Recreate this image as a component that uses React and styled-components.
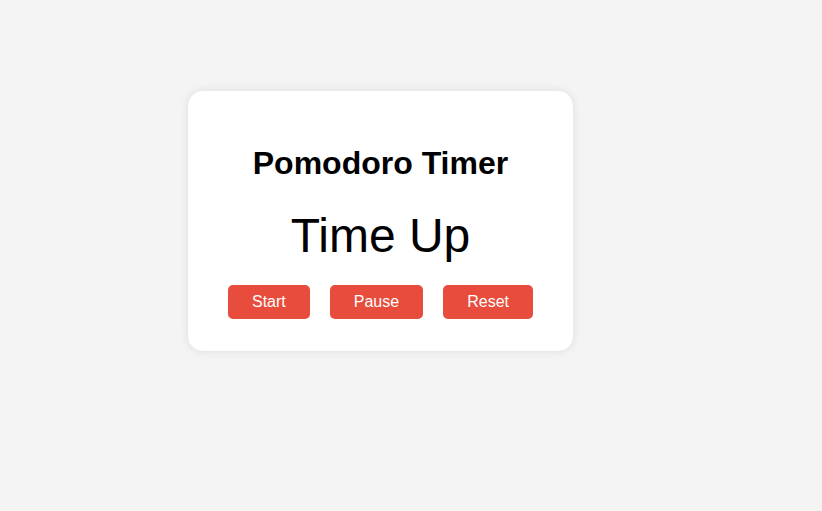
import React from 'react'
import styled, { createGlobalStyle } from 'styled-components'

const GlobalStyle = createGlobalStyle`
  body {
    margin: 0;
    background: #f4f4f4;
    font-family: "Liberation Sans", Arial, sans-serif;
  }
`

const Page = styled.div`
  display: flex;
  align-items: flex-start;
  padding: 91px 0 0 188px;
  min-height: 100vh;
  box-sizing: border-box;
`

const Card = styled.div`
  display: flex;
  flex-direction: column;
  align-items: center;
  padding: 30px 30px 32px;
  background: #fff;
  border-radius: 15px;
  box-shadow: 0 0 10px rgba(0, 0, 0, 0.1);
`

const Title = styled.h1`
  margin: 24px 0 26px;
  font-size: 32px;
  line-height: 37px;
  font-weight: 700;
  color: #000;
`

const Clock = styled.div`
  margin-bottom: 22px;
  font-size: 48px;
  line-height: 55px;
  color: #000;
`

const Controls = styled.div`
  display: flex;
  gap: 20px;
  padding: 0 10px;
`

const Button = styled.button`
  padding: 8px 24px;
  border: none;
  border-radius: 5px;
  background: #e74c3c;
  color: #fff;
  font-family: inherit;
  font-size: 16px;
  line-height: 18px;
  cursor: pointer;
`

export default function App() {
  return (
    <>
      <GlobalStyle />
      <Page>
        <Card>
          <Title>Pomodoro Timer</Title>
          <Clock>Time Up</Clock>
          <Controls>
            <Button>Start</Button>
            <Button>Pause</Button>
            <Button>Reset</Button>
          </Controls>
        </Card>
      </Page>
    </>
  )
}
